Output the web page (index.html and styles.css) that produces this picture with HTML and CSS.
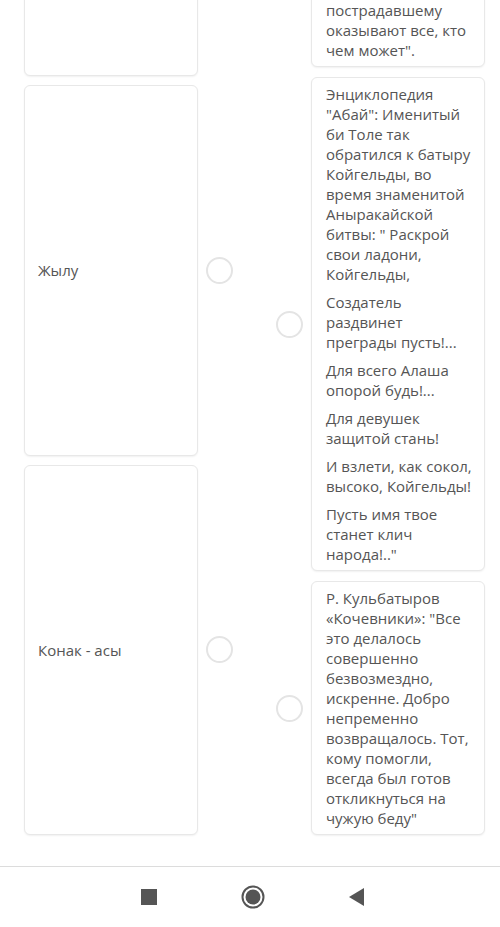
FILE: index.html
```html
<!DOCTYPE html>
<html lang="ru">
<head>
    <meta charset="UTF-8">
    <meta name="viewport" content="width=device-width, initial-scale=1.0">
    <title>Сопоставление</title>
    <link rel="stylesheet" href="styles.css">
</head>
<body>
    <div class="screen">
        <!-- Matching board (scrolled) -->
        <div class="viewport">
            <div class="board">
                <div class="col col-left">
                    <div class="item item-cut">
                        <div class="card"></div>
                        <span class="dot"></span>
                    </div>
                    <div class="item">
                        <div class="card card-word">Жылу</div>
                        <span class="dot"></span>
                    </div>
                    <div class="item">
                        <div class="card card-word">Конак - асы</div>
                        <span class="dot"></span>
                    </div>
                </div>

                <div class="col col-right">
                    <div class="item">
                        <span class="dot"></span>
                        <div class="card card-text card-cut">
                            <p>пострадавшему оказывают все, кто чем может".</p>
                        </div>
                    </div>
                    <div class="item">
                        <span class="dot"></span>
                        <div class="card card-text">
                            <p>Энциклопедия "Абай": Именитый би Толе так обратился к батыру Койгельды, во время знаменитой Аныракайской битвы: " Раскрой свои ладони, Койгельды,</p>
                            <p>Создатель раздвинет преграды пусть!...</p>
                            <p>Для всего Алаша опорой будь!...</p>
                            <p>Для девушек защитой стань!</p>
                            <p>И взлети, как сокол, высоко, Койгельды!</p>
                            <p>Пусть имя твое станет клич народа!.."</p>
                        </div>
                    </div>
                    <div class="item">
                        <span class="dot"></span>
                        <div class="card card-text">
                            <p>Р. Кульбатыров «Кочевники»: "Все это делалось совершенно безвозмездно, искренне. Добро непременно возвращалось. Тот, кому помогли, всегда был готов откликнуться на чужую беду"</p>
                        </div>
                    </div>
                </div>
            </div>
        </div>

        <!-- Android navigation bar -->
        <div class="navbar">
            <span class="nav-slot"><span class="nav-square"></span></span>
            <span class="nav-slot">
                <svg width="24" height="24" viewBox="0 0 24 24">
                    <circle cx="12" cy="12" r="10.5" fill="none" stroke="#555" stroke-width="2"/>
                    <circle cx="12" cy="12" r="7.5" fill="#555"/>
                </svg>
            </span>
            <span class="nav-slot">
                <svg width="16" height="18" viewBox="0 0 16 18">
                    <polygon points="15,0 15,18 0,9" fill="#555"/>
                </svg>
            </span>
        </div>
    </div>
</body>
</html>
```

FILE: styles.css
```css
body {
    margin: 0;
    padding: 0;
    font-family: "Open Sans", Arial, sans-serif;
    background: #fff;
    color: #555;
}
.screen {
    width: 500px;
    height: 927px;
    display: flex;
    flex-direction: column;
}
.viewport {
    height: 866px;
    overflow: hidden;
    border-bottom: 1px solid #dcdcdc;
}

/* Board: two independent columns, scrolled down */
.board {
    display: grid;
    grid-template-columns: 209px 209px;
    column-gap: 43px;
    padding-left: 24px;
    margin-top: -201px;
}
.col {
    display: flex;
    flex-direction: column;
}
.col-left {
    gap: 9px;
}
.col-right {
    gap: 10px;
}
.item {
    display: flex;
    align-items: center;
    gap: 8px;
}
.col-left .item {
    flex: 1 1 0;
}
.col-left .item-cut {
    flex: 0 0 277px;
}
.card {
    box-sizing: border-box;
    width: 174px;
    align-self: stretch;
    background: #fff;
    border: 1px solid #e8e8e8;
    border-radius: 6px;
    box-shadow: 0 1px 2px rgba(0, 0, 0, 0.06);
}
.card-word {
    display: flex;
    align-items: center;
    padding: 0 13px;
    font-size: 15px;
}
.card-text {
    padding: 6px 12px 6px 14px;
    font-size: 15px;
    line-height: 20px;
}
.card-text p {
    margin: 0 0 8px;
}
.card-text p:last-child {
    margin-bottom: 0;
}
.card-cut {
    padding-top: 200px;
}
.dot {
    flex: none;
    box-sizing: border-box;
    width: 27px;
    height: 27px;
    border: 2px solid #e4e4e4;
    border-radius: 50%;
    background: #fff;
}

/* Nav bar */
.navbar {
    flex: 1;
    display: flex;
    align-items: center;
    padding-left: 97px;
}
.nav-slot {
    width: 104px;
    display: flex;
    justify-content: center;
    align-items: center;
}
.nav-square {
    width: 16px;
    height: 16px;
    background: #555;
}
```
